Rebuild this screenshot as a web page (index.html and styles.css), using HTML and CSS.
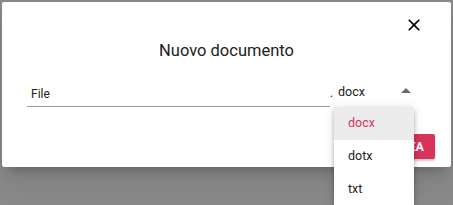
FILE: index.html
```html
<!DOCTYPE html>
<html lang="it">
<head>
<meta charset="utf-8">
<title>Nuovo documento</title>
<link rel="stylesheet" href="styles.css">
</head>
<body>
<div class="dialog">
  <div class="dialog-header">
    <button class="close" aria-label="Chiudi">
      <svg viewBox="0 0 24 24" width="20" height="20"><path d="M19 6.41L17.59 5 12 10.59 6.41 5 5 6.41 10.59 12 5 17.59 6.41 19 12 13.41 17.59 19 19 17.59 13.41 12z" fill="#000"/></svg>
    </button>
  </div>
  <h2 class="title">Nuovo documento</h2>
  <div class="form-row">
    <div class="field">File</div>
    <span class="dot">.</span>
    <div class="select">
      <span class="select-value">docx</span>
      <span class="arrow"></span>
      <ul class="menu">
        <li class="option active">docx</li>
        <li class="option">dotx</li>
        <li class="option">txt</li>
      </ul>
    </div>
  </div>
  <div class="actions">
    <button class="btn-primary">CREA</button>
  </div>
</div>
</body>
</html>
```
FILE: styles.css
```css
html, body {
  margin: 0;
  height: 205px;
  overflow: hidden;
}
body {
  background: #8a8a8a;
  font-family: Roboto, "Noto Sans", sans-serif;
  padding: 2px 2px 0 2px;
  box-sizing: border-box;
}
.dialog {
  position: relative;
  background: #fff;
  height: 165px;
  border-radius: 2px;
  box-shadow: 0 8px 12px -6px rgba(0,0,0,.25), 0 16px 30px 2px rgba(0,0,0,.08);
}
.dialog-header {
  display: flex;
  justify-content: flex-end;
  padding: 13px 27px 0 0;
}
.close {
  border: 0;
  background: none;
  padding: 0;
  width: 20px;
  height: 20px;
  display: block;
}
.close svg { display: block; }
.title {
  margin: 6px 0 0;
  text-align: center;
  font-size: 16.5px;
  line-height: 20px;
  font-weight: 400;
  color: #212121;
}
.form-row {
  display: flex;
  align-items: flex-end;
  margin-top: 23px;
  padding: 0 37px 0 25px;
}
.field {
  flex: 1;
  font-size: 12px;
  line-height: 16px;
  color: #222;
  padding: 0 0 4px 4px;
  border-bottom: 1px solid #9a9a9a;
  margin-bottom: 1px;
}
.dot {
  width: 4px;
  font-size: 12px;
  line-height: 16px;
  color: #222;
  padding-bottom: 7px;
}
.select {
  position: relative;
  width: 80px;
  display: flex;
  align-items: center;
  justify-content: space-between;
  padding: 0 3px 7px 4px;
  box-sizing: border-box;
  border-bottom: 1px solid #d8345a;
}
.select-value {
  font-size: 12.5px;
  line-height: 16px;
  color: #222;
}
.arrow {
  width: 0;
  height: 0;
  border-left: 5px solid transparent;
  border-right: 5px solid transparent;
  border-bottom: 5px solid #6a6a6a;
  margin-top: -3px;
}
.menu {
  position: absolute;
  left: 0;
  top: 100%;
  width: 80px;
  margin: 0;
  padding: 0;
  list-style: none;
  background: #fff;
  z-index: 2;
  box-shadow: 0 2px 4px -1px rgba(0,0,0,.2), 0 4px 5px 0 rgba(0,0,0,.14), 0 1px 10px 0 rgba(0,0,0,.12);
}
.option {
  height: 33px;
  line-height: 32px;
  padding-left: 14px;
  font-size: 12.5px;
  color: #222;
}
.option.active {
  background: #ececec;
  color: #d8345a;
}
.actions {
  display: flex;
  justify-content: flex-end;
  margin-top: 26px;
  padding-right: 16px;
}
.btn-primary {
  border: 0;
  background: #d8345a;
  color: #fff;
  font-family: Roboto, "Noto Sans", sans-serif;
  font-weight: 700;
  font-size: 12.5px;
  height: 25px;
  padding: 0 11px;
  border-radius: 2px;
  box-shadow: 0 2px 2px rgba(0,0,0,.2);
}
```
